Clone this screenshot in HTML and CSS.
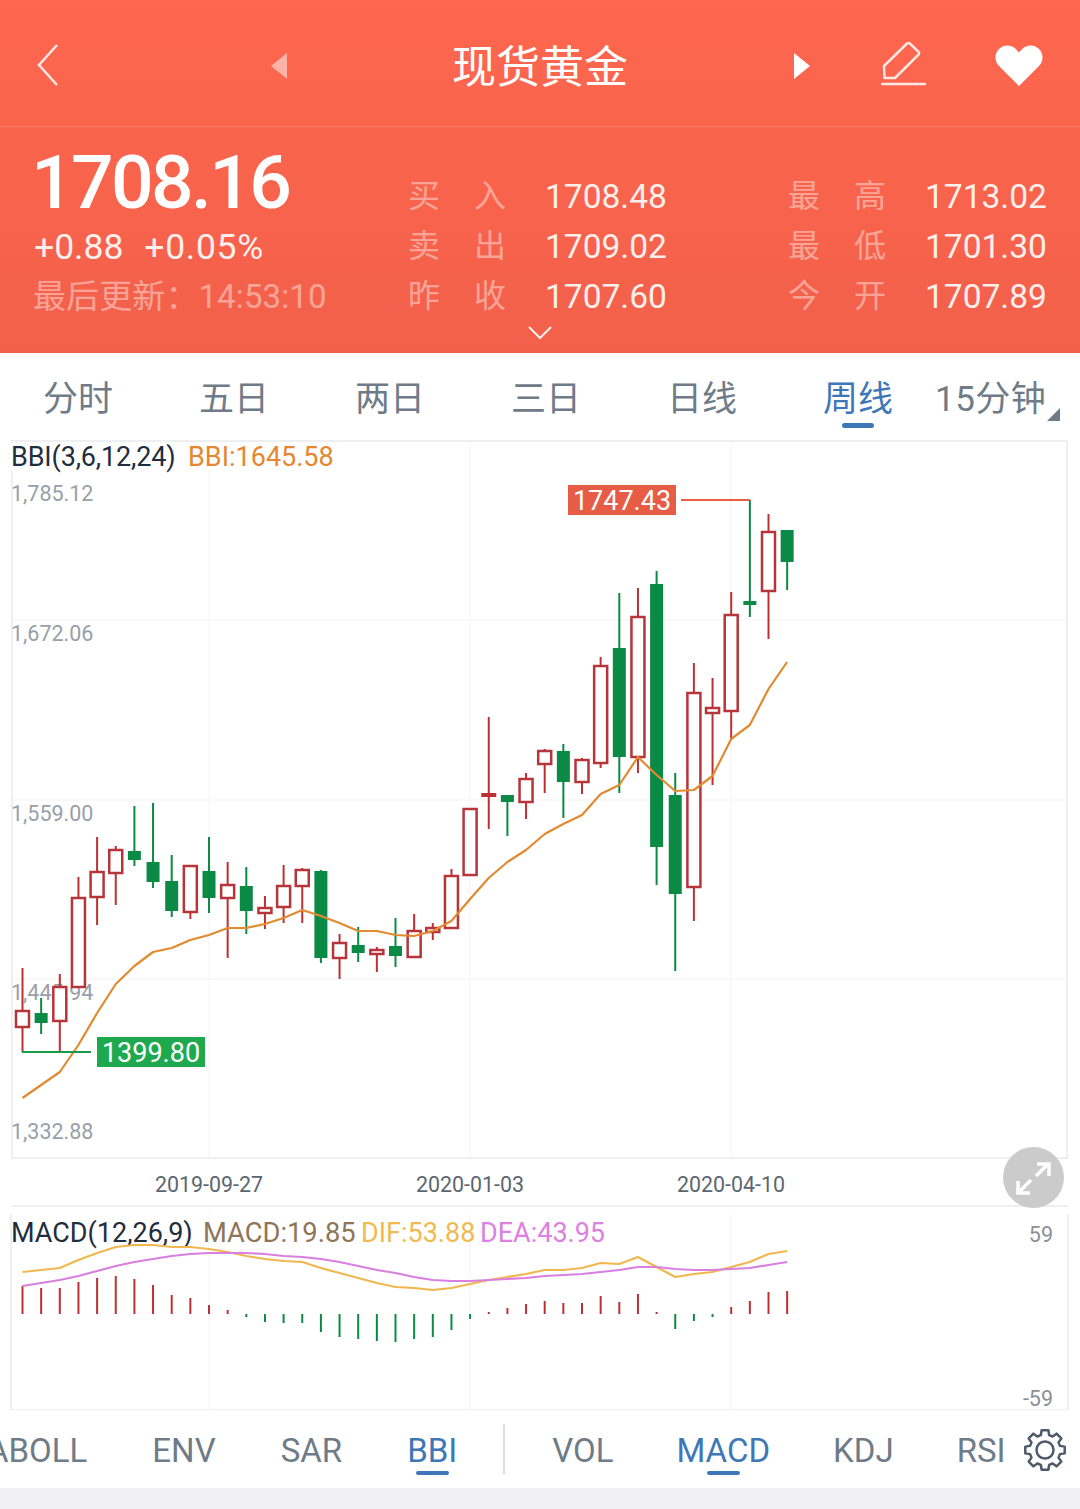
FILE: index.html
```html
<!DOCTYPE html>
<html lang="zh-CN">
<head>
    <meta charset="UTF-8">
    <meta name="viewport" content="width=device-width, initial-scale=1.0">
    <title>现货黄金</title>
    <link rel="stylesheet" href="styles.css">
</head>
<body>
    <div class="hero">
        <div class="nav">
            <svg class="nav-back" width="24" height="44" viewBox="0 0 24 44"><path d="M21 2 3 22l18 20"/></svg>
            <svg class="nav-prev" width="18" height="28" viewBox="0 0 18 28"><path d="M17 1v26L1 14z"/></svg>
            <div class="nav-title">现货黄金</div>
            <svg class="nav-next" width="18" height="28" viewBox="0 0 18 28"><path d="M1 1v26l16-13z"/></svg>
            <svg class="nav-edit" width="46" height="46" viewBox="0 0 46 46"><path d="M3 25 26 2.500q1.500-1 2.800 0l8.800 8.300q1 1.300 0 2.700L14 37H3.500z"/><path d="M1 43h43"/></svg>
            <svg class="nav-heart" width="48" height="42" viewBox="0 0 48 42"><path d="M24 41 4.500 21.500C-1 16-.5 8.500 4 4c5-4.800 12.500-4.500 17 .2L24 7.500l3-3.300C31.500-.5 39-.8 44 4c4.500 4.500 5 12 -.5 17.500z"/></svg>
        </div>
        <div class="quote">
            <div class="quote-main">
                <div class="price">1708.16</div>
                <div class="change"><span>+0.88</span><span class="change-pct">+0.05%</span></div>
                <div class="updated">最后更新：14:53:10</div>
            </div>
            <div class="stats">
                <div class="stat"><div class="stat-label"><span>买</span><span>入</span></div><div class="stat-value">1708.48</div></div>
                <div class="stat"><div class="stat-label"><span>卖</span><span>出</span></div><div class="stat-value">1709.02</div></div>
                <div class="stat"><div class="stat-label"><span>昨</span><span>收</span></div><div class="stat-value">1707.60</div></div>
            </div>
            <div class="stats">
                <div class="stat"><div class="stat-label"><span>最</span><span>高</span></div><div class="stat-value">1713.02</div></div>
                <div class="stat"><div class="stat-label"><span>最</span><span>低</span></div><div class="stat-value">1701.30</div></div>
                <div class="stat"><div class="stat-label"><span>今</span><span>开</span></div><div class="stat-value">1707.89</div></div>
            </div>
        </div>
        <svg class="more" width="24" height="14" viewBox="0 0 24 14"><path d="M1 1l11 11L23 1"/></svg>
    </div>

    <div class="periods">
        <div class="period">分时</div>
        <div class="period">五日</div>
        <div class="period">两日</div>
        <div class="period">三日</div>
        <div class="period">日线</div>
        <div class="period active">周线</div>
        <div class="period period-more">15分钟</div>
    </div>

    <div class="charts">
        <svg id="chart" width="1080" height="980" viewBox="0 430 1080 980">
            <g class="grid">
                <path d="M13 620H1066M13 800H1066M13 979H1066"/>
                <path d="M209 443V1157M470 443V1157M731 443V1157"/>
                <path d="M209 1214V1409M470 1214V1409M731 1214V1409"/>
            </g>
            <path class="frame" d="M12 441V1158H1067V441zM11 1206H1068M11 1214V1410H1068V1214"/>
            <rect class="legend-bg" x="10" y="443" width="330" height="28"/>
            <text class="axis" x="11" y="500.500">1,785.12</text>
            <text class="axis" x="11" y="640.500">1,672.06</text>
            <text class="axis" x="11" y="820.500">1,559.00</text>
            <text class="axis" x="11" y="999.500">1,445.94</text>
            <text class="axis" x="11" y="1138.500">1,332.88</text>
            <text class="legend legend-name" x="11" y="466">BBI(3,6,12,24)</text>
            <text class="legend legend-bbi" x="188" y="466">BBI:1645.58</text>
            <text class="date" x="209" y="1192">2019-09-27</text>
            <text class="date" x="470" y="1192">2020-01-03</text>
            <text class="date" x="731" y="1192">2020-04-10</text>
            <text class="legend legend-name legend-name-macd" x="11" y="1242">MACD(12,26,9)</text>
            <text class="legend legend-macd" x="203" y="1242">MACD:19.85</text>
            <text class="legend legend-dif" x="361" y="1242">DIF:53.88</text>
            <text class="legend legend-dea" x="480" y="1242">DEA:43.95</text>
            <text class="axis axis-right" x="1053" y="1242">59</text>
            <text class="axis axis-right" x="1053" y="1406">-59</text>
            <g id="candles"></g>
            <path class="mark-high" d="M681 500H750"/>
            <rect class="badge-high" x="568" y="485" width="108" height="30"/>
            <text class="badge-text" x="622" y="510">1747.43</text>
            <path class="mark-low" d="M22 1052H91"/>
            <rect class="badge-low" x="97" y="1037" width="108" height="30"/>
            <text class="badge-text" x="151" y="1062">1399.80</text>
        </svg>
        <div class="expand">
            <svg width="61" height="61" viewBox="0 0 61 61"><path d="M33 29 45 17M34 17h12v12M28 33 16 45M15 34v12h12"/></svg>
        </div>
    </div>

    <div class="indicators">
        <div class="ind-list">
            <div class="ind">ABOLL</div>
            <div class="ind">ENV</div>
            <div class="ind">SAR</div>
            <div class="ind active">BBI</div>
        </div>
        <div class="ind-sep"></div>
        <div class="ind-list">
            <div class="ind">VOL</div>
            <div class="ind active">MACD</div>
            <div class="ind">KDJ</div>
            <div class="ind">RSI</div>
        </div>
        <svg class="gear" width="44" height="44" viewBox="-22 -22 44 44"><path id="gearPath"/><circle r="8.500"/></svg>
    </div>
    <div class="footer"></div>

    <script src="chart.js"></script>
</body>
</html>
```

FILE: styles.css
```css
* {
    box-sizing: border-box;
}
body {
    margin: 0;
    width: 1080px;
    height: 1509px;
    overflow: hidden;
    background-color: #ffffff;
    font-family: Roboto, "Noto Sans CJK SC", sans-serif;
}
.hero {
    height: 353px;
    background: linear-gradient(#ff674e, #f2604b);
    color: #ffffff;
}
.nav {
    position: relative;
    display: flex;
    align-items: center;
    height: 127px;
    padding-left: 36px;
    border-bottom: 1px solid #fb7b63;
}
.nav svg {
    flex: none;
    fill: none;
    stroke: #ffffff;
}
.nav-back {
    stroke-width: 2.500;
    opacity: 0.85;
    margin-top: 4px;
}
.nav .nav-prev {
    margin-left: 210px;
    fill: #ffffff;
    stroke: none;
    opacity: 0.5;
    margin-top: 6px;
}
.nav-title {
    width: 172px;
    margin: 9px 3px 0 164px;
    font-size: 44px;
    line-height: 60px;
    white-space: nowrap;
}
.nav .nav-next {
    margin-left: 166px;
    fill: #ffffff;
    stroke: none;
    margin-top: 6px;
}
.nav .nav-edit {
    margin-left: 70px;
    stroke-width: 2.500;
    stroke-linecap: round;
    stroke-linejoin: round;
    opacity: 0.85;
    margin-top: 2px;
}
.nav .nav-heart {
    margin-left: 68px;
    fill: #ffffff;
    stroke: none;
    margin-top: 6px;
}
.quote {
    display: grid;
    grid-template-columns: 374px 380px 1fr;
    height: 195px;
    padding: 15px 0 0 34px;
}
.price {
    margin-left: -3px;
    font-size: 75px;
    font-weight: 500;
    line-height: 80px;
    letter-spacing: -2.600px;
}
.change {
    display: flex;
    gap: 21px;
    font-size: 35.500px;
    line-height: 50px;
    opacity: 0.9;
}
.change-pct {
    letter-spacing: 0.700px;
}
.updated {
    margin-left: -1px;
    font-size: 33px;
    line-height: 50px;
    letter-spacing: 0.100px;
    opacity: 0.42;
}
.stats {
    padding-top: 29px;
}
.stat {
    display: flex;
    height: 50px;
    align-items: center;
    font-size: 33.500px;
}
.stat-label {
    display: flex;
    justify-content: space-between;
    width: 98px;
    margin-right: 39px;
    margin-top: -6px;
    font-size: 32px;
    opacity: 0.42;
}
.stat-value {
    opacity: 0.9;
}
.more {
    display: block;
    margin: 4px auto 0;
    fill: none;
    stroke: #ffffff;
    stroke-width: 2;
    opacity: 0.9;
}
.periods {
    display: grid;
    grid-template-columns: repeat(6, 156px) 1fr;
    height: 77px;
    padding-top: 22px;
    font-size: 35px;
    line-height: 50px;
    text-align: center;
    color: #6f7b87;
}
.period {
    position: relative;
}
.period.active {
    color: #3e77b8;
}
.period.active::after {
    content: "";
    position: absolute;
    left: 62px;
    top: 48px;
    width: 32px;
    height: 5px;
    border-radius: 3px;
    background-color: #3e77b8;
}
.period-more {
    margin-left: -1px;
    letter-spacing: 0.500px;
    text-align: left;
}
.period-more::after {
    content: "";
    position: absolute;
    left: 112px;
    top: 33px;
    border-style: solid;
    border-width: 0 0 13px 13px;
    border-color: transparent transparent #6f7b87 transparent;
}
.charts {
    position: relative;
    height: 980px;
}
#chart {
    display: block;
}
.grid path {
    fill: none;
    stroke: #f7f7f8;
    stroke-width: 1.500;
}
.frame {
    fill: none;
    stroke: #eeeff1;
    stroke-width: 2;
}
.legend-bg {
    fill: #ffffff;
}
.axis {
    font-size: 21.500px;
    fill: #98a0a8;
}
.axis-right {
    text-anchor: end;
    fill: #8b9096;
}
.legend {
    font-size: 27px;
}
.legend-name {
    letter-spacing: -0.150px;
    fill: #1f2d3d;
}
.legend-name-macd {
    letter-spacing: 0;
}
.legend-bbi {
    fill: #e6872f;
}
.legend-macd {
    font-size: 27.300px;
    fill: #8f7558;
}
.legend-dif {
    fill: #efba50;
}
.legend-dea {
    fill: #dd80e2;
}
.date {
    font-size: 21.400px;
    text-anchor: middle;
    fill: #5c6670;
}
.wick {
    stroke-width: 2;
}
.wick-red {
    stroke: #bc3033;
}
.wick-green {
    stroke: #0a8a45;
}
.body-red {
    fill: #ffffff;
    stroke: #b5353a;
    stroke-width: 2.500;
}
.body-green {
    fill: #0a8a45;
}
.body-flat {
    fill: #bc3033;
}
.line {
    fill: none;
    stroke-width: 2.200;
    stroke-linejoin: round;
}
.line-bbi {
    stroke: #e28a2f;
}
.line-dif {
    stroke: #efb74e;
}
.line-dea {
    stroke: #d97fe0;
}
.mark-high {
    fill: none;
    stroke: #e75c45;
    stroke-width: 2;
}
.mark-low {
    fill: none;
    stroke: #1b9a4a;
    stroke-width: 2;
}
.badge-high {
    fill: #e75c45;
}
.badge-low {
    fill: #1fa94f;
}
.badge-text {
    font-size: 27px;
    text-anchor: middle;
    fill: #ffffff;
}
.expand {
    position: absolute;
    left: 1003px;
    top: 717px;
    width: 61px;
    height: 61px;
    border-radius: 50%;
    background-color: #cbcbcb;
}
.expand svg {
    display: block;
    fill: none;
    stroke: #ffffff;
    stroke-width: 3.500;
}
.indicators {
    display: flex;
    align-items: flex-start;
    height: 78px;
    overflow: hidden;
    font-size: 33px;
    color: #6f7b87;
}
.ind-list {
    display: flex;
    gap: 63px;
    flex: none;
}
.ind-list:first-child {
    gap: 65px;
    margin-left: -13px;
}
.ind {
    position: relative;
    height: 78px;
    padding-top: 21px;
    line-height: 40px;
}
.ind.active {
    color: #3e77b8;
}
.ind.active::after {
    content: "";
    position: absolute;
    left: 50%;
    top: 61px;
    width: 33px;
    height: 4px;
    margin-left: -16px;
    border-radius: 2px;
    background-color: #3e77b8;
}
.ind-sep {
    flex: none;
    width: 2px;
    height: 50px;
    margin: 14px 47px 0 46px;
    background-color: #dcdee0;
}
.gear {
    flex: none;
    margin: 18px 0 0 17px;
    fill: none;
    stroke: #4d5a69;
    stroke-width: 2.500;
    stroke-linejoin: round;
}
.footer {
    height: 21px;
    background-color: #efeff4;
}
```

FILE: chart.js
```js
// one row per week: high, low, body top, body bottom (screen y), r = up, g = down, x = flat cross
const candles = [
    ['r', 968, 1052, 1011, 1027], ['g', 998, 1034, 1013, 1023], ['r', 974, 1052, 987, 1021],
    ['r', 877, 987, 898, 987], ['r', 837, 925, 872, 897], ['r', 846, 905, 850, 873],
    ['g', 806, 866, 851, 860], ['g', 803, 888, 862, 882], ['g', 855, 917, 881, 911],
    ['r', 866, 919, 866, 912], ['g', 837, 913, 871, 898], ['r', 862, 958, 885, 898],
    ['g', 867, 934, 886, 911], ['r', 896, 929, 908, 913], ['r', 865, 923, 886, 907],
    ['r', 868, 923, 870, 886], ['g', 870, 963, 871, 958], ['r', 934, 979, 943, 958],
    ['g', 927, 962, 945, 953], ['r', 947, 972, 950, 954], ['g', 918, 967, 946, 956],
    ['r', 914, 958, 931, 957], ['r', 923, 940, 928, 932], ['r', 869, 928, 876, 928],
    ['r', 808, 876, 809, 875], ['x', 717, 829, 793, 797], ['g', 795, 836, 795, 802],
    ['r', 773, 819, 779, 802], ['r', 749, 793, 751, 764], ['g', 744, 818, 751, 782],
    ['r', 758, 794, 760, 782], ['r', 657, 768, 666, 763], ['g', 593, 793, 648, 757],
    ['r', 588, 773, 617, 757], ['g', 571, 885, 584, 847], ['g', 773, 971, 795, 894],
    ['r', 663, 921, 693, 887], ['r', 678, 785, 708, 713], ['r', 592, 740, 615, 711],
    ['g', 500, 617, 601, 605], ['r', 514, 639, 532, 591], ['g', 530, 590, 530, 562]
];

const bbi = [1098, 1085, 1072, 1045, 1013, 984, 966, 952, 948, 940, 935, 928, 928, 924, 918, 910, 916, 923, 931, 931, 935,
    936, 931, 921, 899, 878, 862, 850, 834, 824, 815, 794, 785, 757, 775, 791, 790, 776, 739, 725, 689, 662];
const macd = [1286, 1288, 1288, 1282, 1278, 1276, 1279, 1285, 1295, 1298, 1305, 1310, 1317, 1322, 1323, 1323, 1332, 1337, 1339, 1341, 1342,
    1339, 1337, 1330, 1319, 1312, 1308, 1304, 1301, 1303, 1303, 1296, 1302, 1294, 1312, 1329, 1321, 1317, 1307, 1301, 1292, 1291];
const dif = [1272, 1270, 1268, 1260, 1253, 1247, 1245, 1245, 1247, 1247, 1249, 1252, 1256, 1259, 1261, 1262, 1268, 1273, 1278, 1283, 1287,
    1288, 1290, 1288, 1284, 1280, 1277, 1274, 1270, 1270, 1268, 1263, 1264, 1257, 1267, 1277, 1274, 1272, 1267, 1262, 1254, 1251];
const dea = [1286, 1283, 1280, 1276, 1271, 1266, 1262, 1259, 1256, 1254, 1253, 1253, 1253, 1254, 1256, 1257, 1259, 1262, 1266, 1270, 1273,
    1277, 1280, 1281, 1281, 1280, 1279, 1278, 1276, 1275, 1274, 1272, 1270, 1267, 1267, 1269, 1270, 1270, 1269, 1268, 1265, 1262];

const SVG_NS = 'http://www.w3.org/2000/svg';
const macdBase = 1314;
const group = document.getElementById('candles');
const bodyClass = { r: 'body-red', g: 'body-green', x: 'body-flat' };

function xOf(i) {
    return 22.5 + i * 18.65;
}

function add(tag, attrs) {
    let el = document.createElementNS(SVG_NS, tag);
    for (let key in attrs) {
        el.setAttribute(key, attrs[key]);
    }
    group.appendChild(el);
}

function addLine(values, cls) {
    let points = values.map((y, i) => xOf(i).toFixed(1) + ',' + y).join(' ');
    add('polyline', { points: points, class: 'line ' + cls });
}

candles.forEach(function(c, i) {
    let x = xOf(i);
    let half = c[0] === 'x' ? 7.5 : 6.5;
    add('line', { x1: x, x2: x, y1: c[1], y2: c[2], class: 'wick ' + (c[0] === 'g' ? 'wick-green' : 'wick-red') });
    add('rect', { x: x - half, y: c[3], width: half * 2, height: c[4] - c[3], class: bodyClass[c[0]] });
});

macd.forEach(function(y, i) {
    let x = xOf(i);
    add('line', { x1: x, x2: x, y1: y, y2: macdBase, class: 'wick ' + (y < macdBase ? 'wick-red' : 'wick-green') });
});

addLine(bbi, 'line-bbi');
addLine(dif, 'line-dif');
addLine(dea, 'line-dea');

// settings cog, 8 teeth
let gear = '';
for (let k = 0; k < 8; k++) {
    let a = k * Math.PI / 4 - Math.PI / 2;
    [[15.5, -0.27], [20, -0.17], [20, 0.17], [15.5, 0.27]].forEach(function(p) {
        let px = p[0] * Math.cos(a + p[1]);
        let py = p[0] * Math.sin(a + p[1]);
        gear += (gear ? 'L' : 'M') + px.toFixed(2) + ' ' + py.toFixed(2);
    });
}
document.getElementById('gearPath').setAttribute('d', gear + 'z');
```
